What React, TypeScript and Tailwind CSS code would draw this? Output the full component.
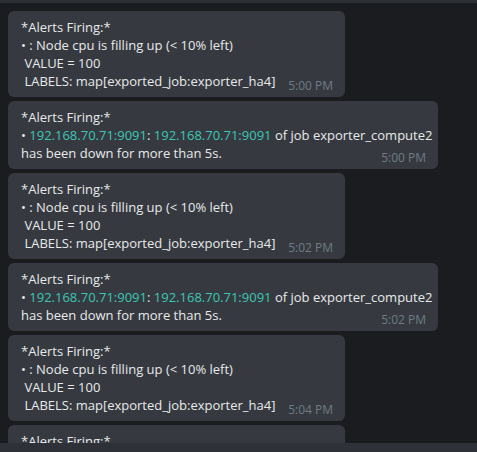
const ip = "192.168.70.71:9091";

function Bubble({ time, wide, children }: { time: string; wide?: boolean; children: React.ReactNode }) {
  return (
    <div
      className={`relative shrink-0 rounded-[6px] bg-[#363a40] pl-[13px] pr-3 py-[7px] text-[13px] leading-[18px] text-[#e8e9ea] whitespace-pre ${
        wide ? "w-[430px]" : "w-[337px]"
      }`}
    >
      {children}
      <span className="absolute right-3 bottom-[4px] text-[12px] leading-[14px] text-[#6f7a85]">{time}</span>
    </div>
  );
}

function CpuAlert({ time }: { time: string }) {
  return (
    <Bubble time={time}>
      <div>*Alerts Firing:*</div>
      <div>• : Node cpu is filling up (&lt; 10% left)</div>
      <div> VALUE = 100</div>
      <div> LABELS: map[exported_job:exporter_ha4]</div>
    </Bubble>
  );
}

function DownAlert({ time }: { time: string }) {
  return (
    <Bubble time={time} wide>
      <div>*Alerts Firing:*</div>
      <div>
        • <span className="text-[#3cc6b4]">{ip}</span>: <span className="text-[#3cc6b4]">{ip}</span> of job exporter_compute2
      </div>
      <div>has been down for more than 5s.</div>
    </Bubble>
  );
}

export default function App() {
  return (
    <div
      className="flex h-[452px] w-[477px] flex-col overflow-hidden bg-[#1b1c1f]"
      style={{ fontFamily: '"Open Sans", "Noto Sans", sans-serif' }}
    >
      <div className="h-[3px] shrink-0 bg-[#2d3035]" />
      <div className="flex flex-1 flex-col gap-1 overflow-hidden px-2 pt-2">
        <CpuAlert time="5:00 PM" />
        <DownAlert time="5:00 PM" />
        <CpuAlert time="5:02 PM" />
        <DownAlert time="5:02 PM" />
        <CpuAlert time="5:04 PM" />
        <CpuAlert time="5:06 PM" />
      </div>
      <div className="h-[9px] shrink-0 bg-[#2e3137]" />
    </div>
  );
}
